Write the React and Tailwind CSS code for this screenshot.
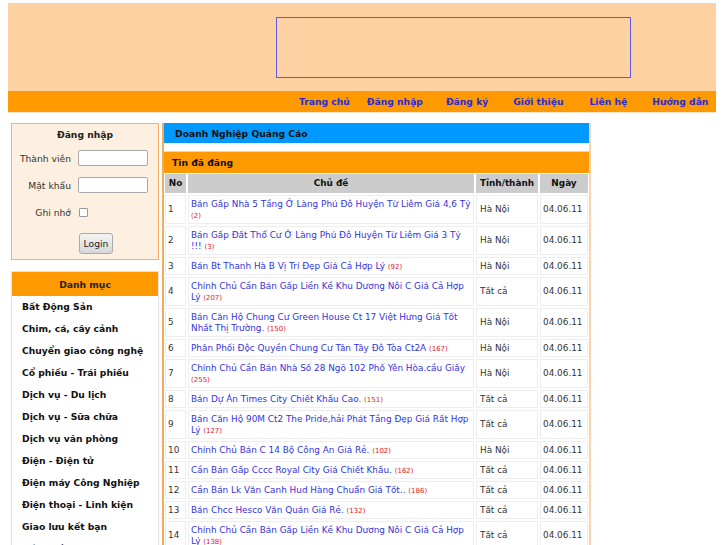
const rows = [
  ["1", "Bán Gấp Nhà 5 Tầng Ở Làng Phú Đô Huyện Từ Liêm Giá 4,6 Tỷ", "2", "Hà Nội"],
  ["2", "Bán Gấp Đất Thổ Cư Ở Làng Phú Đô Huyện Từ Liêm Giá 3 Tỷ !!!", "3", "Hà Nội"],
  ["3", "Bán Bt Thanh Hà B Vị Trí Đẹp Giá Cả Hợp Lý", "92", "Hà Nội"],
  ["4", "Chính Chủ Cần Bán Gấp Liền Kề Khu Dương Nôi C Giá Cả Hợp Lý", "207", "Tất cả"],
  ["5", "Bán Căn Hộ Chung Cư Green House Ct 17 Việt Hưng Giá Tốt Nhất Thị Trường.", "150", "Hà Nội"],
  ["6", "Phân Phối Độc Quyền Chung Cư Tân Tây Đô Tòa Ct2A", "167", "Hà Nội"],
  ["7", "Chính Chủ Cần Bán Nhà Số 28 Ngõ 102 Phố Yên Hòa.cầu Giấy", "255", "Hà Nội"],
  ["8", "Bán Dự Án Times City Chiết Khấu Cao.", "151", "Tất cả"],
  ["9", "Bán Căn Hộ 90M Ct2 The Pride,hải Phát Tầng Đẹp Giá Rất Hợp Lý", "127", "Tất cả"],
  ["10", "Chính Chủ Bán C 14 Bộ Công An Giá Rẻ.", "102", "Hà Nội"],
  ["11", "Cần Bán Gấp Cccc Royal City Giá Chiết Khấu.", "162", "Tất cả"],
  ["12", "Cần Bán Lk Văn Canh Hud Hàng Chuẩn Giá Tốt..", "186", "Tất cả"],
  ["13", "Bán Chcc Hesco Văn Quán Giá Rẻ.", "132", "Tất cả"],
  ["14", "Chính Chủ Cần Bán Gấp Liền Kề Khu Dương Nôi C Giá Cả Hợp Lý", "138", "Tất cả"],
  ["15", "Bán Nhà Mặt Phố Giá Tốt", "120", "Hà Nội"],
];

const categories = [
  "Bất Động Sản",
  "Chim, cá, cây cảnh",
  "Chuyển giao công nghệ",
  "Cổ phiếu - Trái phiếu",
  "Dịch vụ - Du lịch",
  "Dịch vụ - Sữa chữa",
  "Dịch vụ văn phòng",
  "Điện - Điện tử",
  "Điện máy Công Nghiệp",
  "Điện thoại - Linh kiện",
  "Giao lưu kết bạn",
  "Hóa chất",
];

export default function App() {
  return (
    <div className="h-[545px] overflow-hidden bg-white font-['DejaVu_Sans',sans-serif] text-[9.2px] leading-[11px] text-[#333]">
      {/* header */}
      <div className="ml-[8px] mt-[3px] w-[708px]">
        <div className="flex h-[88px] bg-[#fed1a3] pl-[268px] pt-[14px]">
          <div className="h-[61px] w-[355px] border border-[#5b5be8]" />
        </div>
        <div className="flex h-[21px] items-center whitespace-nowrap bg-[#ff9900] pl-[291px] font-bold text-[#2b2bd4]">
          <a>Trang chủ</a>
          <a className="ml-[17px]">Đăng nhập</a>
          <a className="ml-[23px]">Đăng ký</a>
          <a className="ml-[25px]">Giới thiệu</a>
          <a className="ml-[26px]">Liên hệ</a>
          <a className="ml-[25px]">Hướng dẫn</a>
        </div>
        <div className="h-[1px] bg-[#fde3c8]" />
      </div>

      <div className="ml-[11px] mt-[10px] flex items-start">
        {/* sidebar */}
        <div className="w-[148px]">
          <div className="h-[137px] border border-[#f9b06a] bg-[#fdf0e0] pt-[4px]">
            <div className="text-center font-bold leading-[13px] text-[#222]">Đăng nhập</div>
            <div className="mt-[9px] flex items-center">
              <span className="w-[59px] text-right text-[#333]">Thành viên</span>
              <input className="ml-[7px] h-[16px] w-[70px] rounded-[2px] border border-[#aaa] bg-white" />
            </div>
            <div className="mt-[11px] flex items-center">
              <span className="w-[59px] text-right text-[#333]">Mật khẩu</span>
              <input className="ml-[7px] h-[16px] w-[70px] rounded-[2px] border border-[#aaa] bg-white" />
            </div>
            <div className="mt-[14px] flex items-center">
              <span className="w-[59px] text-right text-[#333]">Ghi nhớ</span>
              <span className="ml-[8px] h-[9px] w-[9px] rounded-[1px] border border-[#999] bg-white" />
            </div>
            <div className="mt-[15px] flex">
              <button className="ml-[67px] h-[21px] w-[34px] rounded-[3px] border border-[#aaa] bg-gradient-to-b from-[#f4f4f4] to-[#d8d8d8] text-[9.2px] text-[#222]">
                Login
              </button>
            </div>
          </div>

          <div className="mt-[11px] border border-[#dde4f0] bg-white">
            <div className="flex h-[24px] items-center justify-center bg-[#ff9900] font-bold text-[#222]">Danh mục</div>
            <div className="-mt-[1px] pl-[10px]">
              {categories.map((c) => (
                <div key={c} className="flex h-[22px] items-center font-bold text-[#111]">
                  {c}
                </div>
              ))}
            </div>
          </div>
        </div>

        {/* main */}
        <div className="ml-[3px] w-[429px] border-l-2 border-r-2 border-l-[#f9a95e] border-r-[#fdd3a8]">
          <div className="flex h-[20px] items-center bg-[#0099ff] pl-[11px] font-bold text-[#111]">Doanh Nghiệp Quảng Cáo</div>
          <div className="h-[9px] border-b border-[#fdd3a8]" />
          <div className="flex h-[21px] items-center bg-[#ff9900] pl-[8px] font-bold text-[#111]">Tin đã đăng</div>
          <table className="-ml-[1px] -mt-[1px] w-[427px] table-fixed border-separate border-spacing-[2px] text-[8.9px]">
            <thead>
              <tr className="bg-[#cccccc] font-bold text-[#111]">
                <th className="h-[19px] w-[21px] text-center">No</th>
                <th className="text-center">Chủ đề</th>
                <th className="w-[62px] text-center">Tỉnh/thành</th>
                <th className="w-[48px] text-center">Ngày</th>
              </tr>
            </thead>
            <tbody>
              {rows.map(([no, title, count, city]) => (
                <tr key={no}>
                  <td className="border border-[#eeeeee] px-[2px] py-[2.5px] align-middle text-[#333]">{no}</td>
                  <td className="border border-[#eeeeee] px-[2px] py-[2.5px] align-middle text-[#3333dd]">
                    {title} <span className="text-[7px] leading-none text-[#e8151b]">({count})</span>
                  </td>
                  <td className="border border-[#eeeeee] px-[3px] py-[2.5px] align-middle text-[#333]">{city}</td>
                  <td className="border border-[#eeeeee] px-[2px] py-[2.5px] align-middle text-[#333]">04.06.11</td>
                </tr>
              ))}
            </tbody>
          </table>
        </div>
      </div>
    </div>
  );
}
